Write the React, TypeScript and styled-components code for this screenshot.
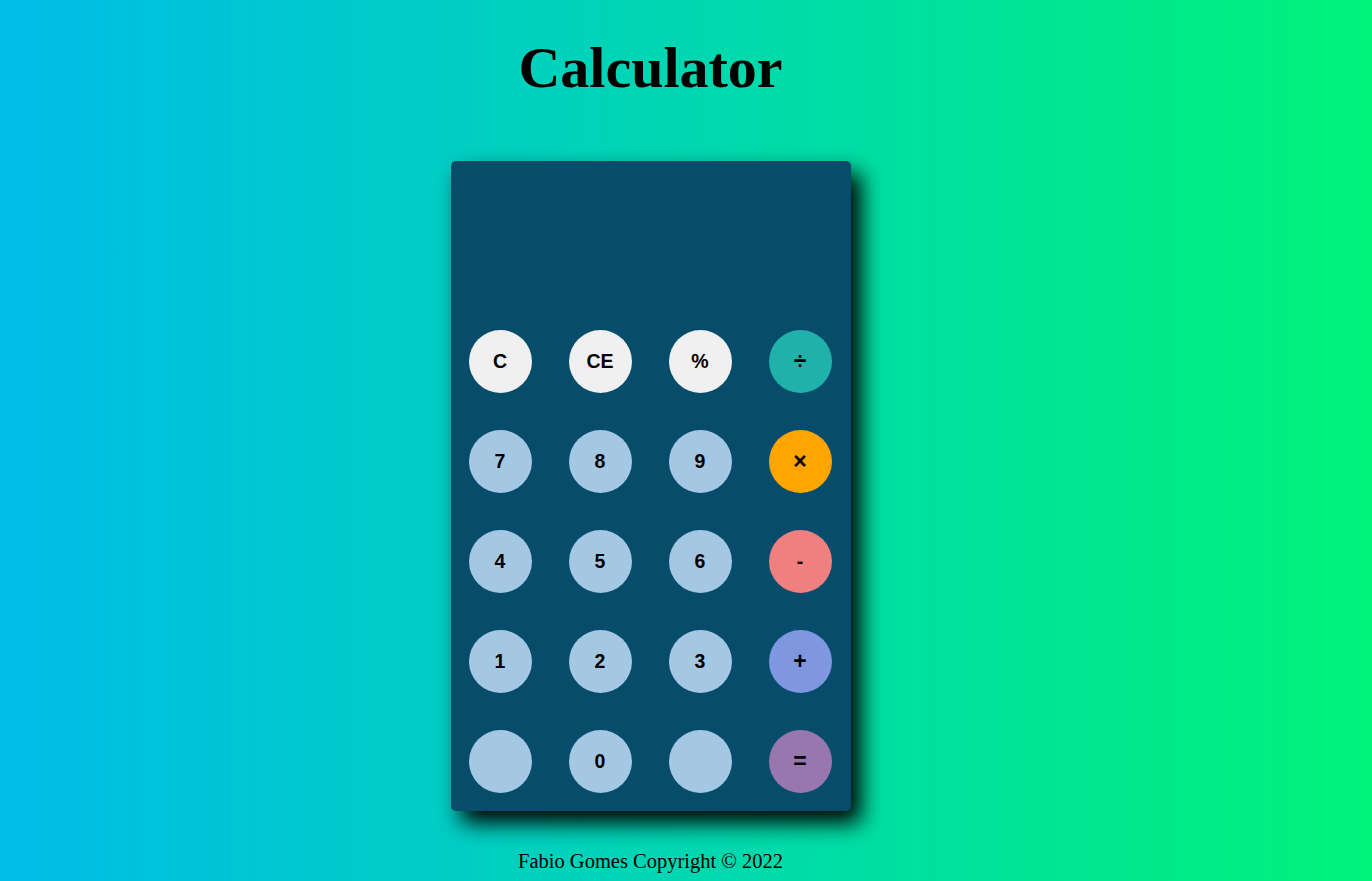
import React from "react";
import styled, { createGlobalStyle } from "styled-components";

const Global = createGlobalStyle`
  html, body { margin: 0; padding: 0; }
  body { font-family: "Liberation Serif", serif; }
`;

const Page = styled.div`
  min-height: 881px;
  background: linear-gradient(to right, #00bce8, #00f27a);
  display: flex;
  flex-direction: column;
  align-items: center;
  padding: 39px 71px 0 0;
  box-sizing: border-box;
`;

const Title = styled.h1`
  margin: 0 0 64px;
  font-family: "Liberation Serif", serif;
  font-weight: 700;
  font-size: 58px;
  line-height: 58px;
  color: #000;
`;

const Panel = styled.div`
  width: 400px;
  background: #074d6b;
  border-radius: 5px;
  box-shadow: 10px 12px 22px #000;
  display: flex;
  flex-direction: column;
`;

const Display = styled.div`
  height: 169px;
`;

const Keys = styled.div`
  display: grid;
  grid-template-columns: repeat(4, 63px);
  column-gap: 37px;
  row-gap: 37px;
  padding: 0 19px 18px 18px;
`;

const Key = styled.button<{ $bg: string; $big?: boolean }>`
  width: 63px;
  height: 63px;
  border-radius: 50%;
  border: none;
  padding: 0;
  background: ${(p) => p.$bg};
  font-family: "Liberation Sans", Arial, sans-serif;
  font-weight: 700;
  font-size: ${(p) => (p.$big ? "23px" : "19.5px")};
  color: #000;
  display: flex;
  align-items: center;
  justify-content: center;
`;

const Footer = styled.footer`
  margin-top: 40px;
  font-family: "Liberation Serif", serif;
  font-size: 20.5px;
  line-height: 20px;
  color: #000;
`;

const W = "#f0f0f0";
const N = "#a4c8e4";

const keys: [string, string, boolean?][] = [
  ["C", W], ["CE", W], ["%", W], ["÷", "#20b2aa", true],
  ["7", N], ["8", N], ["9", N], ["×", "#ffa500", true],
  ["4", N], ["5", N], ["6", N], ["-", "#f08080"],
  ["1", N], ["2", N], ["3", N], ["+", "#7f96e0", true],
  ["", N], ["0", N], ["", N], ["=", "#9777ae", true],
];

export default function App() {
  return (
    <>
      <Global />
      <Page>
        <Title>Calculator</Title>
        <Panel>
          <Display />
          <Keys>
            {keys.map(([label, bg, big], i) => (
              <Key key={i} $bg={bg} $big={big}>{label}</Key>
            ))}
          </Keys>
        </Panel>
        <Footer>Fabio Gomes Copyright © 2022</Footer>
      </Page>
    </>
  );
}
